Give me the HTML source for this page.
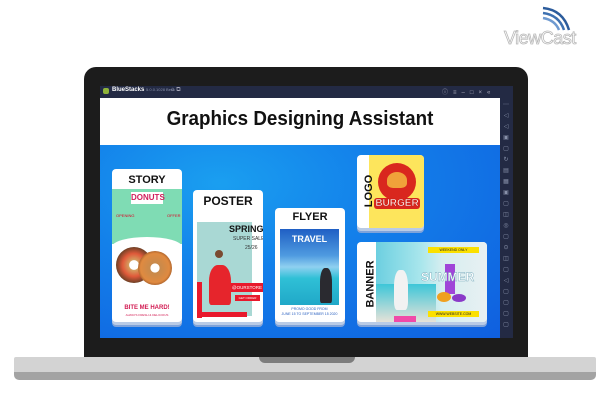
<!DOCTYPE html>
<html><head><style>
*{margin:0;padding:0;box-sizing:border-box}
body{width:602px;height:414px;background:#fff;position:relative;overflow:hidden;font-family:"Liberation Sans",sans-serif}
.a{position:absolute;white-space:nowrap}
.card{position:absolute;background:#fff;border-radius:4px;box-shadow:0 3px 0 #b9cbe6,0 5px 0 #7fa3da}
.ct{position:absolute;left:0;right:0;text-align:center;font-weight:bold;color:#111;font-size:11px}
</style></head><body>
<svg class="a" style="left:535px;top:2px" width="40" height="32" viewBox="0 0 40 32">
<path d="M8 6 Q28 8 34 28" stroke="#2c5c9c" stroke-width="2.5" fill="none"/>
<path d="M8 11 Q24 13 29 28" stroke="#3d70b0" stroke-width="2.5" fill="none"/>
<path d="M8 16 Q20 18 24 28" stroke="#6f9ad0" stroke-width="2.5" fill="none"/>
</svg>
<div class="a" style="left:504px;top:28px;font-size:18px;color:#fff;-webkit-text-stroke:0.8px #b8b8b8;letter-spacing:-0.5px">ViewCast</div>
<div class="a" style="left:84px;top:67px;width:444px;height:292px;background:#1c1c1c;border-radius:12px 12px 0 0"></div>
<div class="a" style="left:14px;top:357px;width:582px;height:15px;background:#d3d3d3;border-radius:2px 2px 0 0"></div>
<div class="a" style="left:14px;top:372px;width:582px;height:8px;background:#a3a3a3;border-radius:0 0 5px 5px"></div>
<div class="a" style="left:259px;top:357px;width:96px;height:6px;background:#7d7d7d;border-radius:0 0 6px 6px"></div>
<div class="a" style="left:100px;top:86px;width:413px;height:12px;background:#232a44"></div>
<div class="a" style="left:103px;top:88px;width:6px;height:6px;background:#8fb33a;border-radius:2px"></div>
<div class="a" style="left:112px;top:87px;font-size:6px;color:#fff;font-weight:bold">BlueStacks <span style="color:#8890a8;font-weight:normal;font-size:4px">5.0.0.1028 Beta</span></div>
<div class="a" style="left:171px;top:87px;font-size:6px;color:#aab">⌂ ⧉</div>
<div class="a" style="left:442px;top:87px;font-size:6px;color:#aab;letter-spacing:5px">ⓘ≡–□×«</div>
<div class="a" style="left:500px;top:98px;width:13px;height:240px;background:#232a44"></div>
<div class="a" style="left:503px;top:100px;width:6px;font-size:6px;line-height:11px;color:#8891aa;text-align:center">⋯<br>◁<br>◁<br>▣<br>▢<br>↻<br>▤<br>▦<br>▣<br>▢<br>◫<br>◎<br>▢<br>⊙<br>◫<br>▢<br>◁<br>▢<br>▢<br>▢<br>▢</div>
<div class="a" style="left:100px;top:98px;width:400px;height:47px;background:#fff"></div>
<div class="a" style="left:100px;top:108px;width:400px;text-align:center;font-size:20px;font-weight:bold;color:#111;transform:scaleX(0.94)">Graphics Designing Assistant</div>
<div class="a" style="left:100px;top:145px;width:400px;height:193px;background:radial-gradient(ellipse at 30% 20%,#1a9ff0 0%,#1380ea 40%,#0f5fdf 100%)"></div>
<div class="card" style="left:112px;top:169px;width:70px;height:153px;overflow:hidden">
<div class="ct" style="top:5px;font-size:11px">STORY</div>
<div class="a" style="left:0;top:20px;width:70px;height:55px;background:#7fdcb4"></div>
<div class="a" style="left:19px;top:23px;width:32px;height:12px;background:#fff;color:#d01c5a;font-size:8px;font-weight:bold;text-align:center;line-height:12px">DONUTS</div>
<div class="a" style="left:4px;top:44px;font-size:4px;color:#d02;">OPENING</div>
<div class="a" style="left:55px;top:44px;font-size:4px;color:#d02;">OFFER</div>
<div class="a" style="left:0;top:68px;width:70px;height:20px;background:#fff;border-radius:50% 50% 0 0"></div>
<div class="a" style="left:4px;top:78px;width:36px;height:36px;border-radius:50%;background:radial-gradient(circle,#fff 18%,#d4a060 20%,#e05a3a 45%,#5b3c22 75%)"></div>
<div class="a" style="left:26px;top:82px;width:34px;height:34px;border-radius:50%;background:radial-gradient(circle,#fff 18%,#c78a4c 20%,#e08a40 60%,#8a4a20 80%)"></div>
<div class="a" style="left:0;top:136px;width:70px;text-align:center;font-size:6px;font-weight:bold;color:#d21b52">BITE ME HARD!</div>
<div class="a" style="left:0;top:144px;width:70px;text-align:center;font-size:3px;color:#d21b52">ALWAYS FRESH &amp; DELICIOUS</div>
</div>
<div class="card" style="left:193px;top:190px;width:70px;height:132px;overflow:hidden">
<div class="ct" style="top:4px;font-size:12px">POSTER</div>
<div class="a" style="left:4px;top:32px;width:55px;height:94px;background:#a9d8d4"></div>
<div class="a" style="left:4px;top:92px;width:5px;height:36px;background:#e8192c"></div>
<div class="a" style="left:4px;top:122px;width:50px;height:5px;background:#e8192c"></div>
<div class="a" style="left:22px;top:60px;width:8px;height:8px;border-radius:50%;background:#7a4a30"></div>
<div class="a" style="left:16px;top:75px;width:22px;height:40px;background:#e6252c;border-radius:40% 40% 10% 10%"></div>
<div class="a" style="left:36px;top:34px;font-size:9px;font-weight:bold;color:#111">SPRING</div>
<div class="a" style="left:40px;top:46px;font-size:5px;color:#333">SUPER SALE</div>
<div class="a" style="left:52px;top:55px;font-size:5px;color:#333">25/26</div>
<div class="a" style="left:38px;top:93px;width:32px;height:9px;background:#e8192c;color:#fff;font-size:4.5px;line-height:9px;text-align:center">@OURSTORE</div>
<div class="a" style="left:42px;top:105px;width:25px;height:6px;background:#e8192c;color:#fff;font-size:3px;line-height:6px;text-align:center">GET ORDER</div>
</div>
<div class="card" style="left:275px;top:208px;width:70px;height:114px;overflow:hidden">
<div class="ct" style="top:3px;font-size:11px">FLYER</div>
<div class="a" style="left:5px;top:21px;width:59px;height:76px;background:linear-gradient(#1f5fc4 0%,#4f9be0 35%,#8fd0f0 50%,#2fc0d6 65%,#20a8c8 100%)"></div>
<div class="a" style="left:5px;top:26px;width:59px;text-align:center;font-size:9px;font-weight:bold;color:#fff">TRAVEL</div>
<div class="a" style="left:45px;top:60px;width:12px;height:35px;background:#2a2a30;border-radius:40% 40% 10% 10%"></div>
<div class="a" style="left:5px;top:99px;width:59px;text-align:center;font-size:3.5px;color:#2a60c0;line-height:5px">PROMO GOOD FROM<br>JUNE 15 TO SEPTEMBER 15 2020</div>
</div>
<div class="card" style="left:357px;top:155px;width:67px;height:73px;overflow:hidden">
<div class="a" style="left:12px;top:0;width:55px;height:73px;background:#fde55c"></div>
<div class="a" style="left:-4px;top:30px;transform:rotate(-90deg);font-size:11px;font-weight:bold;color:#111">LOGO</div>
<div class="a" style="left:21px;top:8px;width:38px;height:38px;border-radius:50%;background:#d9271e"></div>
<div class="a" style="left:30px;top:17px;width:20px;height:16px;border-radius:50% 50% 30% 30%;background:#f0a23a"></div>
<div class="a" style="left:17px;top:43px;width:46px;text-align:center;font-size:10px;font-weight:bold;color:#fff;-webkit-text-stroke:0.5px #c01a10;background:#d9271e;border-radius:3px">BURGER</div>
</div>
<div class="card" style="left:357px;top:242px;width:130px;height:80px;overflow:hidden">
<div class="a" style="left:19px;top:0;width:111px;height:80px;background:linear-gradient(90deg,#6ccfe0 0%,#a8e6ec 40%,#d6eef0 60%,#e8f0f2 100%)"></div>
<div class="a" style="left:19px;top:42px;width:60px;height:38px;background:linear-gradient(#3dc6d8,#e6e2d8)"></div>
<div class="a" style="left:-10px;top:36px;transform:rotate(-90deg);font-size:11px;font-weight:bold;color:#111">BANNER</div>
<div class="a" style="left:37px;top:28px;width:14px;height:40px;background:#f2f2f2;border-radius:40% 40% 20% 20%"></div>
<div class="a" style="left:37px;top:74px;width:22px;height:6px;background:#f04aa8"></div>
<div class="a" style="left:71px;top:5px;width:51px;height:6px;background:#fbe000;font-size:3.5px;line-height:6px;text-align:center;color:#222">WEEKEND ONLY</div>
<div class="a" style="left:88px;top:22px;width:10px;height:30px;background:#a045d8"></div>
<div class="a" style="left:64px;top:28px;font-size:12px;font-weight:bold;color:#fff;-webkit-text-stroke:0.4px #7ab">SUMMER</div>
<div class="a" style="left:80px;top:50px;width:14px;height:10px;border-radius:50%;background:#f0a020"></div>
<div class="a" style="left:95px;top:52px;width:14px;height:8px;border-radius:50%;background:#8a3ac8"></div>
<div class="a" style="left:71px;top:69px;width:51px;height:6px;background:#fbe000;font-size:3.5px;line-height:6px;text-align:center;color:#222">WWW.WEBSITE.COM</div>
</div>
</body></html>
